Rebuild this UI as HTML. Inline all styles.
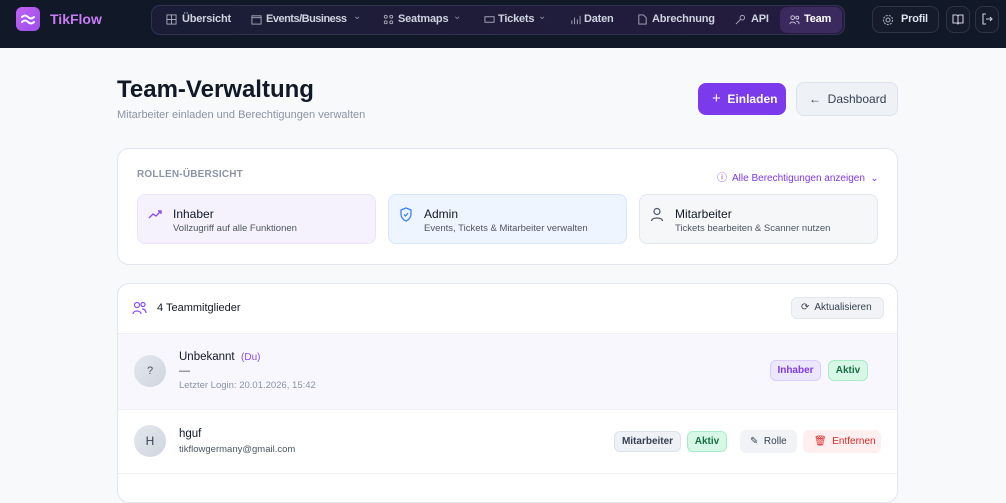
<!DOCTYPE html>
<html><head><meta charset="utf-8"><style>
*{box-sizing:border-box;margin:0;padding:0}
body{width:1006px;height:481px;overflow:hidden;background:#f8f9fb;font-family:"Liberation Sans",sans-serif;position:relative;color:#111827}
.a{position:absolute}
.hdr{left:0;top:0;width:1006px;height:48px;background:#111827}
.nav{left:151px;top:5px;width:694px;height:30px;border:1px solid #2e3450;border-radius:9px;background:linear-gradient(90deg,#1a1d35,#251c3f)}
.t{position:absolute;top:13px;font-size:11px;font-weight:bold;color:#cfd3e0;white-space:nowrap;letter-spacing:-0.2px}
.ic{position:absolute;top:14px}
.ch{position:absolute;top:11px;font-size:10px;color:#8a8fa3}
.hb{top:6px;height:27px;border:1px solid #2e3445;border-radius:8px;background:#151b2a}
.card{background:#fff;border:1px solid #e2e6ee;border-radius:12px}
.role{top:194px;height:50px;border-radius:8px;border:1px solid #e2e6ee}
.role b{position:absolute;left:35px;top:12px;font-size:12px;font-weight:normal;color:#111827}
.role span{position:absolute;left:35px;top:28px;font-size:9.5px;color:#4b5563}
.role svg{position:absolute;left:10px;top:12px}
.badge{height:21px;line-height:19px;border-radius:6px;font-size:10px;font-weight:bold;text-align:center}
</style></head><body>
<div class="a hdr"></div>
<div class="a" style="left:16px;top:7px;width:24px;height:24px;border-radius:6px;background:linear-gradient(135deg,#c063f5,#9b4de8)"><svg width="24" height="24" viewBox="0 0 24 24" fill="none" stroke="#fff" stroke-width="2" stroke-linecap="round"><path d="M6 10c2-2 4-2 6 0s4 2 6 0M6 15c2-2 4-2 6 0s4 2 6 0"/></svg></div>
<div class="a" style="left:50px;top:11px;font-size:14px;font-weight:bold;color:#c77df5">TikFlow</div>
<div class="a nav"></div>
<div class="a" style="left:780px;top:7px;width:62px;height:26px;background:#3b2a5e;border-radius:7px"></div>
<svg class="ic" style="left:166px" width="11" height="11" viewBox="0 0 12 12" fill="none" stroke="#aab" stroke-width="1"><rect x="1" y="1" width="10" height="10"/><path d="M6 1v10M1 6h10"/></svg>
<div class="t" style="left:182px">Übersicht</div>
<svg class="ic" style="left:251px" width="11" height="11" viewBox="0 0 12 12" fill="none" stroke="#aab" stroke-width="1"><rect x="1" y="2" width="10" height="9"/><path d="M1 4h10"/></svg>
<div class="t" style="left:266px;letter-spacing:-0.5px">Events/Business</div><div class="ch" style="left:353px">⌄</div>
<svg class="ic" style="left:383px" width="11" height="11" viewBox="0 0 12 12" fill="none" stroke="#aab" stroke-width="1"><circle cx="3" cy="3" r="1.6"/><circle cx="9" cy="3" r="1.6"/><circle cx="3" cy="9" r="1.6"/><circle cx="9" cy="9" r="1.6"/></svg>
<div class="t" style="left:398px">Seatmaps</div><div class="ch" style="left:453px">⌄</div>
<svg class="ic" style="left:484px" width="11" height="11" viewBox="0 0 12 12" fill="none" stroke="#aab" stroke-width="1"><rect x="1" y="3" width="10" height="6"/></svg>
<div class="t" style="left:498px">Tickets</div><div class="ch" style="left:538px">⌄</div>
<svg class="ic" style="left:570px" width="11" height="11" viewBox="0 0 12 12" stroke="#aab" stroke-width="1"><path d="M2 11V7M5 11V4M8 11V6M11 11V2"/></svg>
<div class="t" style="left:584px">Daten</div>
<svg class="ic" style="left:637px" width="11" height="11" viewBox="0 0 12 12" fill="none" stroke="#aab" stroke-width="1"><path d="M2 1h5l3 3v7H2z"/></svg>
<div class="t" style="left:652px">Abrechnung</div>
<svg class="ic" style="left:735px" width="11" height="11" viewBox="0 0 12 12" fill="none" stroke="#aab" stroke-width="1"><circle cx="8" cy="4" r="2.5"/><path d="M6 6l-5 5"/></svg>
<div class="t" style="left:751px">API</div>
<svg class="ic" style="left:789px" width="11" height="11" viewBox="0 0 12 12" fill="none" stroke="#ccd" stroke-width="1"><circle cx="4" cy="4" r="2"/><circle cx="9" cy="4" r="1.6"/><path d="M1 11c0-3 6-3 6 0M8 8c2 0 3 1 3 3"/></svg>
<div class="t" style="left:804px;color:#fff">Team</div>
<div class="a hb" style="left:872px;width:67px"></div>
<svg class="a" style="left:882px;top:14px" width="12" height="12" viewBox="0 0 12 12" fill="none" stroke="#aab" stroke-width="1.1"><circle cx="6" cy="6" r="2"/><circle cx="6" cy="6" r="4.6" stroke-dasharray="2 1.2"/></svg>
<div class="t" style="left:901px;color:#dfe3ee">Profil</div>
<div class="a hb" style="left:946px;width:24px"></div>
<svg class="a" style="left:952px;top:14px" width="12" height="11" viewBox="0 0 12 11" fill="none" stroke="#ccd" stroke-width="1.1"><path d="M1 1h4l1 1 1-1h4v8H7l-1 1-1-1H1zM6 2v8"/></svg>
<div class="a hb" style="left:975px;width:24px"></div>
<svg class="a" style="left:981px;top:13px" width="12" height="12" viewBox="0 0 12 12" fill="none" stroke="#ccd" stroke-width="1.1"><path d="M5 1H2v10h3M5 6h6M9 4l2 2-2 2"/></svg>

<div class="a" style="left:117px;top:76px;font-size:24px;font-weight:bold;color:#111827">Team-Verwaltung</div>
<div class="a" style="left:117px;top:109px;font-size:11px;color:#8b93a5">Mitarbeiter einladen und Berechtigungen verwalten</div>
<div class="a" style="left:698px;top:83px;width:88px;height:32px;border-radius:8px;background:#7c3aed;color:#fff;font-size:12px;font-weight:bold;line-height:32px;padding-left:14px"><span style="font-weight:normal;font-size:15px">+</span>&nbsp; Einladen</div>
<div class="a" style="left:796px;top:82px;width:102px;height:34px;border-radius:8px;background:#eef1f6;border:1px solid #dde2ea;color:#374151;font-size:12px;line-height:32px;padding-left:12px">←&nbsp; Dashboard</div>

<div class="a card" style="left:117px;top:148px;width:781px;height:117px"></div>
<div class="a" style="left:137px;top:169px;font-size:10px;color:#8b93a5;font-weight:bold;letter-spacing:.2px">ROLLEN-ÜBERSICHT</div>
<div class="a" style="left:717px;top:169px;font-size:10px;color:#7c3aed">ⓘ&nbsp; Alle Berechtigungen anzeigen &nbsp;⌄</div>
<div class="a role" style="left:137px;width:239px;background:#f5f2fe;border-color:#ebe4fb"><svg width="16" height="14" viewBox="0 0 16 14" fill="none" stroke="#8b4ef0" stroke-width="1.4"><path d="M1 11l4-4 3 2 5-5M10 4h3v3"/></svg><b>Inhaber</b><span>Vollzugriff auf alle Funktionen</span></div>
<div class="a role" style="left:388px;width:239px;background:#eef5fe;border-color:#d7e6fb"><svg width="14" height="15" viewBox="0 0 14 15" fill="none" stroke="#3b82f6" stroke-width="1.3"><path d="M7 1l5 2v4c0 3-2 6-5 7-3-1-5-4-5-7V3z"/><path d="M5 7.5l1.5 1.5 2.5-3"/></svg><b>Admin</b><span>Events, Tickets &amp; Mitarbeiter verwalten</span></div>
<div class="a role" style="left:639px;width:239px;background:#f6f7f9"><svg width="14" height="15" viewBox="0 0 14 15" fill="none" stroke="#4b5563" stroke-width="1.2"><circle cx="7" cy="4.5" r="3"/><path d="M1.5 14c0-4 11-4 11 0"/></svg><b>Mitarbeiter</b><span>Tickets bearbeiten &amp; Scanner nutzen</span></div>

<div class="a card" style="left:117px;top:283px;width:781px;height:220px;overflow:hidden">
<div class="a" style="left:0;top:49px;width:781px;height:77px;background:#f8f7fe;border-top:1px solid #eef0f4;border-bottom:1px solid #eef0f4"></div>
<div class="a" style="left:0;top:189px;width:781px;border-top:1px solid #eef0f4"></div>
</div>
<svg class="a" style="left:132px;top:301px" width="15" height="14" viewBox="0 0 15 14" fill="none" stroke="#8b4ef0" stroke-width="1.2"><circle cx="5" cy="4" r="2.5"/><circle cx="11" cy="3.5" r="2"/><path d="M1 13c0-4 8-4 8 0M10 8c2.5 0 4 1.5 4 4"/></svg>
<div class="a" style="left:157px;top:302px;font-size:11px;color:#111827">4 Teammitglieder</div>
<div class="a" style="left:791px;top:297px;width:93px;height:22px;border-radius:6px;background:#f1f3f6;border:1px solid #e2e6ee;font-size:10px;color:#374151;line-height:20px;padding-left:9px">⟳&nbsp; Aktualisieren</div>

<div class="a" style="left:134px;top:355px;width:32px;height:32px;border-radius:50%;background:linear-gradient(135deg,#e5e8ee,#cfd5df);text-align:center;line-height:32px;font-size:11px;color:#4b5563">?</div>
<div class="a" style="left:179px;top:351px;font-size:11.5px;color:#111827">Unbekannt &nbsp;<span style="color:#8b4ef0;font-size:10px">(Du)</span></div>
<div class="a" style="left:179px;top:365px;font-size:11px;color:#374151">—</div>
<div class="a" style="left:179px;top:380px;font-size:9.5px;color:#8b93a5">Letzter Login: 20.01.2026, 15:42</div>
<div class="a badge" style="left:770px;top:360px;width:51px;background:#ede7fe;border:1px solid #d9ccfb;color:#7c3aed">Inhaber</div>
<div class="a badge" style="left:828px;top:360px;width:40px;background:#d8f8e7;border:1px solid #a7ecc6;color:#166f44">Aktiv</div>

<div class="a" style="left:134px;top:425px;width:32px;height:32px;border-radius:50%;background:linear-gradient(135deg,#e5e8ee,#cfd5df);text-align:center;line-height:32px;font-size:12px;color:#374151">H</div>
<div class="a" style="left:179px;top:428px;font-size:11.5px;color:#111827">hguf</div>
<div class="a" style="left:179px;top:444px;font-size:9.5px;color:#4b5563">tikflowgermany@gmail.com</div>
<div class="a badge" style="left:614px;top:431px;width:67px;background:#eef1f6;border:1px solid #dde2ea;color:#374151">Mitarbeiter</div>
<div class="a badge" style="left:687px;top:431px;width:40px;background:#d8f8e7;border:1px solid #a7ecc6;color:#166f44">Aktiv</div>
<div class="a" style="left:740px;top:430px;width:57px;height:23px;border-radius:6px;background:#f1f3f6;font-size:10px;color:#374151;line-height:23px;padding-left:10px">✎&nbsp; Rolle</div>
<div class="a" style="left:803px;top:430px;width:78px;height:23px;border-radius:6px;background:#fef0f0;font-size:10px;color:#dc2626;line-height:23px;padding-left:11px">🗑&nbsp; Entfernen</div>
</body></html>
